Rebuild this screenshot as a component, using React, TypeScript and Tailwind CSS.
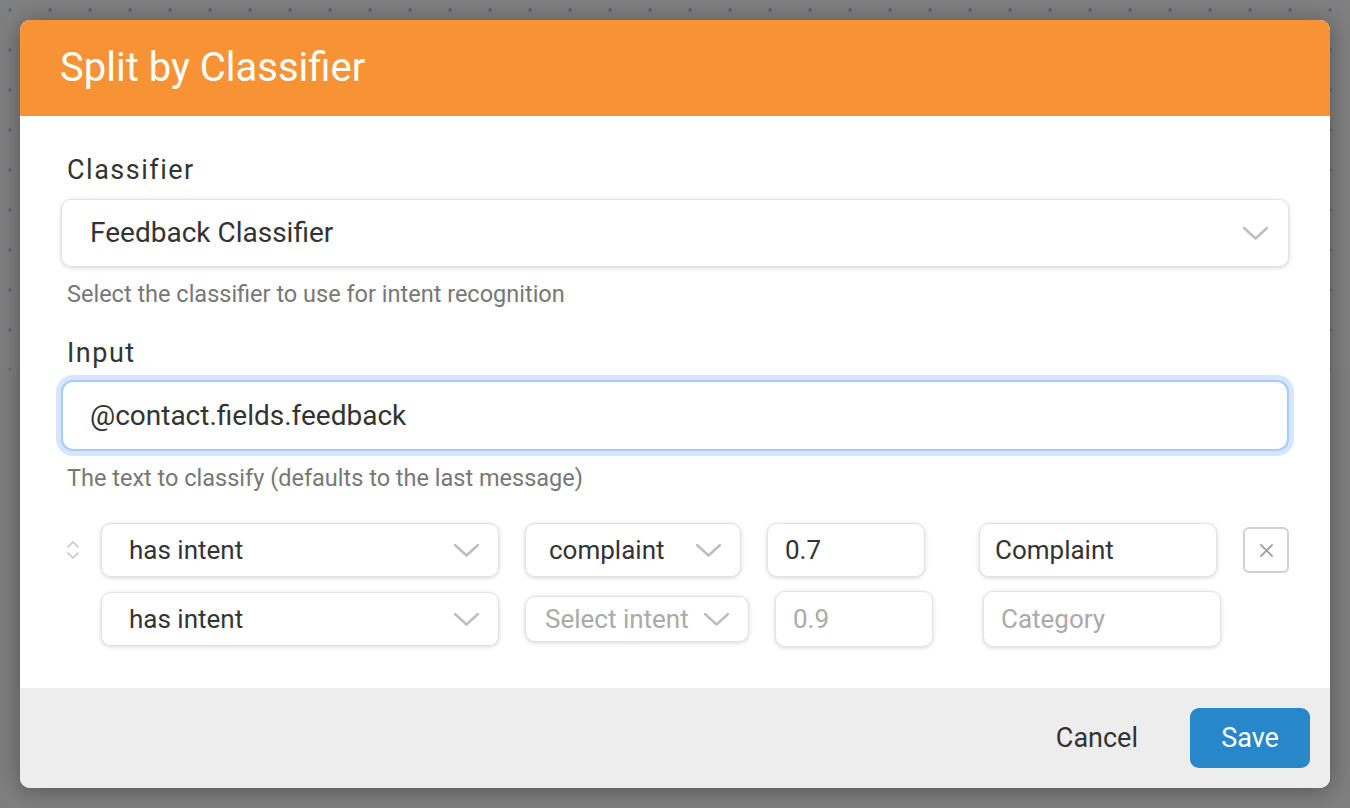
import type { ReactNode } from "react";

function Chevron({ className = "" }: { className?: string }) {
  return (
    <svg width="27" height="15" viewBox="0 0 27 15" className={className} fill="none">
      <polyline points="2,2 13.5,12.5 25,2" stroke="#bdbdbd" strokeWidth="2.4" strokeLinecap="round" strokeLinejoin="round" />
    </svg>
  );
}

function SortIcon() {
  return (
    <svg width="14" height="22" viewBox="0 0 14 22" fill="none">
      <polyline points="2,8 7,3 12,8" stroke="#c4c4c4" strokeWidth="1.6" strokeLinecap="round" strokeLinejoin="round" />
      <polyline points="2,14 7,19 12,14" stroke="#c4c4c4" strokeWidth="1.6" strokeLinecap="round" strokeLinejoin="round" />
    </svg>
  );
}

function Box({ className = "", children }: { className?: string; children: ReactNode }) {
  return (
    <div
      className={`flex items-center rounded-[10px] border border-[#e3e3e3] bg-white shadow-[0_1px_4px_rgba(0,0,0,0.16)] ${className}`}
    >
      {children}
    </div>
  );
}

export default function App() {
  return (
    <div className="relative h-[808px] w-[1350px] overflow-hidden bg-[#7f7f7f] font-['Roboto',sans-serif]">
      <div className="h-[370px] bg-[#808080] bg-[radial-gradient(circle,#5e6c78_1.6px,transparent_1.8px)] bg-[length:40px_40px] bg-[position:-10px_-10px]" />

      {/* modal */}
      <div className="absolute left-[20px] top-[20px] flex h-[768px] w-[1310px] flex-col overflow-hidden rounded-[10px] bg-white shadow-[0_2px_24px_rgba(0,0,0,0.35)]">
        <div className="flex h-[96px] shrink-0 items-center bg-[#f79335] pl-[40px]">
          <h1 className="text-[40px] leading-none text-white">Split by Classifier</h1>
        </div>

        <div className="flex flex-1 flex-col px-[41px] pt-[38px]">
          <label className="pl-[6px] text-[27px] leading-[32px] tracking-[1.5px] text-[#333]">Classifier</label>
          <Box className="mt-[13px] h-[68px] justify-between pl-[28px] pr-[19px]">
            <span className="text-[28px] text-[#333]">Feedback Classifier</span>
            <Chevron />
          </Box>
          <p className="mt-[13px] pl-[6px] text-[23.5px] leading-[28px] text-[#777]">
            Select the classifier to use for intent recognition
          </p>

          <label className="mt-[29px] pl-[6px] text-[27px] leading-[32px] tracking-[1.5px] text-[#333]">Input</label>
          <div className="mt-[11px] flex h-[71px] items-center rounded-[12px] border-2 border-[#a9caff] bg-white pl-[27px] ring-[5px] ring-[#d7e6ff]">
            <span className="text-[28px] text-[#333]">@contact.fields.feedback</span>
          </div>
          <p className="mt-[13px] pl-[6px] text-[23.5px] leading-[28px] text-[#777]">
            The text to classify (defaults to the last message)
          </p>

          {/* rules */}
          <div className="mt-[31px] flex items-center">
            <div className="flex w-[40px] justify-start pl-[5px]">
              <SortIcon />
            </div>
            <Box className="h-[54px] w-[398px] justify-between pl-[27px] pr-[18px]">
              <span className="text-[26px] text-[#333]">has intent</span>
              <Chevron />
            </Box>
            <Box className="ml-[26px] h-[54px] w-[216px] justify-between pl-[23px] pr-[18px]">
              <span className="text-[26px] text-[#333]">complaint</span>
              <Chevron />
            </Box>
            <Box className="ml-[26px] h-[54px] w-[158px] pl-[17px]">
              <span className="text-[26px] text-[#333]">0.7</span>
            </Box>
            <Box className="ml-[54px] h-[54px] w-[238px] pl-[15px]">
              <span className="text-[26px] text-[#333]">Complaint</span>
            </Box>
            <button className="ml-[26px] flex h-[46px] w-[46px] items-center justify-center rounded-[6px] border-2 border-[#d0d0d0] bg-white">
              <svg width="15" height="15" viewBox="0 0 16 16">
                <path d="M2 2 L14 14 M14 2 L2 14" stroke="#9a9a9a" strokeWidth="1.7" strokeLinecap="round" />
              </svg>
            </button>
          </div>

          <div className="mt-[14px] flex items-center">
            <div className="w-[40px]" />
            <Box className="h-[54px] w-[398px] justify-between pl-[27px] pr-[18px]">
              <span className="text-[26px] text-[#333]">has intent</span>
              <Chevron />
            </Box>
            <Box className="ml-[26px] h-[46px] w-[224px] justify-between pl-[19px] pr-[18px]">
              <span className="text-[26px] text-[#aaa]">Select intent</span>
              <Chevron />
            </Box>
            <Box className="ml-[26px] h-[56px] w-[158px] pl-[17px]">
              <span className="text-[26px] text-[#aaa]">0.9</span>
            </Box>
            <Box className="ml-[50px] h-[56px] w-[238px] pl-[17px]">
              <span className="text-[26px] text-[#aaa]">Category</span>
            </Box>
          </div>
        </div>

        <div className="flex h-[100px] shrink-0 items-center justify-end gap-[52px] bg-[#ededed] pr-[20px]">
          <button className="text-[27px] text-[#333]">Cancel</button>
          <button className="h-[60px] w-[120px] rounded-[9px] bg-[#2887cb] text-[27px] text-white">Save</button>
        </div>
      </div>
    </div>
  );
}
